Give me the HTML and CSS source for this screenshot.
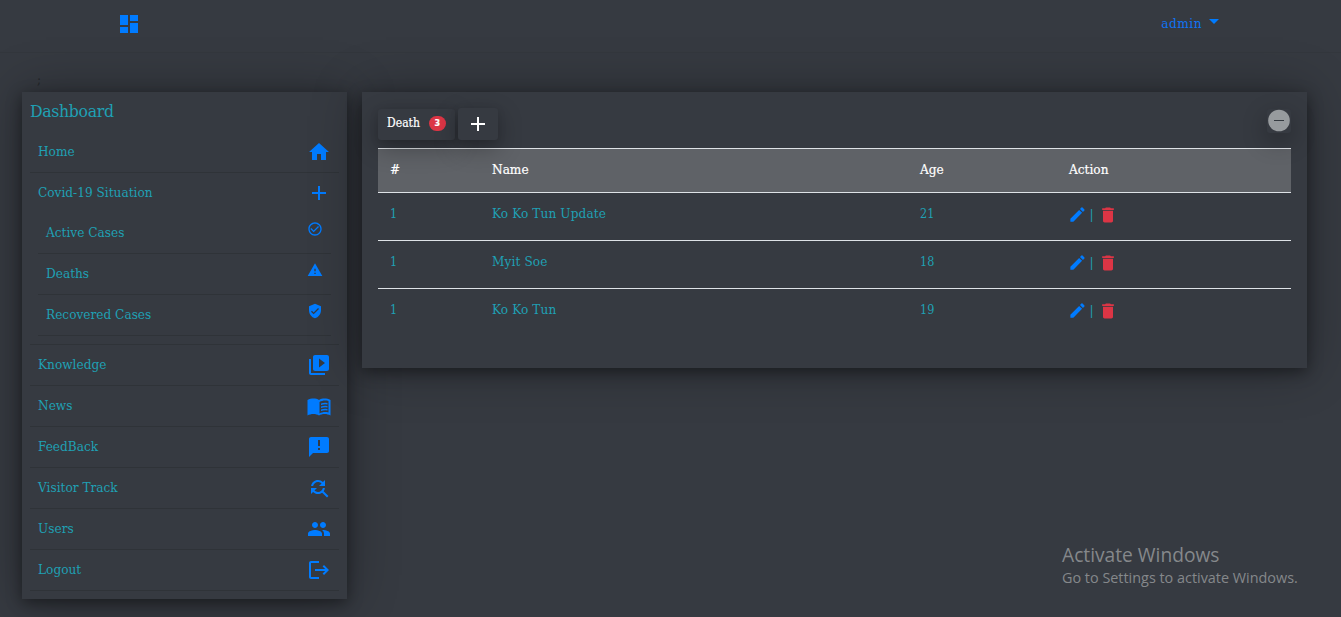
FILE: index.html
```html
<!DOCTYPE html>
<html lang="en">
<head>
<meta charset="utf-8">
<title>Dashboard</title>
<link rel="stylesheet" href="styles.css">
</head>
<body>
<svg class="defs" aria-hidden="true">
<symbol id="edit" viewBox="0 0 24 24"><path d="M3 17.25V21h3.75L17.81 9.94l-3.75-3.75L3 17.25zM20.71 7.04a1 1 0 0 0 0-1.41l-2.34-2.34a1 1 0 0 0-1.41 0l-1.83 1.83 3.75 3.75 1.83-1.83z"/></symbol>
<symbol id="trash" viewBox="0 0 24 24"><path d="M6 19c0 1.100.9 2 2 2h8c1.100 0 2-.9 2-2V7H6v12zM19 4h-3.500l-1-1h-5l-1 1H5v2h14V4z"/></symbol>
<symbol id="plus" viewBox="0 0 24 24"><path d="M19 13h-6v6h-2v-6H5v-2h6V5h2v6h6v2z"/></symbol>
</svg>
<header class="navbar">
  <a class="brand"><svg class="icon" viewBox="0 0 24 24"><path d="M3 13h8V3H3v10zm0 8h8v-6H3v6zm10 0h8V11h-8v10zm0-18v6h8V3h-8z"/></svg></a>
  <a class="user">admin<span class="caret"></span></a>
</header>
<div class="stray">;</div>
<div class="layout">
  <aside class="sidebar">
    <h1 class="title">Dashboard</h1>
    <a class="row"><span>Home</span><svg class="icon" viewBox="0 0 24 24"><path d="M10 20v-6h4v6h5v-8h3L12 3 2 12h3v8z"/></svg></a>
    <div class="group">
      <a class="row head"><span>Covid-19 Situation</span><svg class="icon"><use href="#plus"/></svg></a>
      <div class="subs">
        <a class="row sub"><span>Active Cases</span><svg class="icon" viewBox="0 0 24 24"><path d="M16.590 7.580L10 14.170l-3.590-3.580L5 12l5 5 8-8zM12 2C6.480 2 2 6.480 2 12s4.480 10 10 10 10-4.480 10-10S17.520 2 12 2zm0 18c-4.420 0-8-3.580-8-8s3.580-8 8-8 8 3.580 8 8-3.580 8-8 8z"/></svg></a>
        <a class="row sub"><span>Deaths</span><svg class="icon" viewBox="0 0 24 24"><path d="M1 21h22L12 2 1 21zm12-3h-2v-2h2v2zm0-4h-2v-4h2v4z"/></svg></a>
        <a class="row sub"><span>Recovered Cases</span><svg class="icon" viewBox="0 0 24 24"><path d="M12 1L3 5v6c0 5.550 3.840 10.740 9 12 5.160-1.260 9-6.450 9-12V5l-9-4zm-2 16l-4-4 1.410-1.410L10 14.170l6.590-6.590L18 9l-8 8z"/></svg></a>
      </div>
    </div>
    <a class="row"><span>Knowledge</span><svg class="icon" viewBox="0 0 24 24"><path d="M4 6H2v14c0 1.100.9 2 2 2h14v-2H4V6zm16-4H8c-1.100 0-2 .9-2 2v12c0 1.100.9 2 2 2h12c1.100 0 2-.9 2-2V4c0-1.100-.9-2-2-2zm-8 12.500v-9l6 4.500-6 4.500z"/></svg></a>
    <a class="row news"><span>News</span><svg class="icon" viewBox="0 0 24 24"><path fill-rule="evenodd" d="M12 5C10.500 3.900 8.400 3.500 6.500 3.500S2.400 3.900.5 5v15.500c1.500-1 4-1.500 6-1.500s4 .5 5.500 1.500c1.500-1 3.500-1.500 5.500-1.500s4.500.5 6 1.500V5c-1.900-1.100-4.100-1.500-6-1.500S13.500 3.900 12 5zm9.500 12.500c-3.200-.9-6.700-.3-9 1V7c2.300-1.400 5.800-1.900 9-1z"/><path d="M14 8.500q3-1.200 6.500-.6v1.500q-3.500-.5-6.500.6zm0 3q3-1.200 6.500-.6v1.500q-3.500-.5-6.500.6zm0 3q3-1.200 6.500-.6v1.500q-3.500-.5-6.500.6z"/></svg></a>
    <a class="row"><span>FeedBack</span><svg class="icon" viewBox="0 0 24 24"><path d="M20 2H4c-1.100 0-2 .9-2 2v18l4-4h14c1.100 0 2-.9 2-2V4c0-1.100-.9-2-2-2zm-7 13h-2v-2h2v2zm0-4h-2V5h2v6z"/></svg></a>
    <a class="row"><span>Visitor Track</span><svg class="icon" viewBox="0 0 24 24"><path d="M11 6c1.380 0 2.630.56 3.540 1.460L12 10h6V4l-2.050 2.050C14.680 4.780 12.930 4 11 4c-3.530 0-6.430 2.610-6.920 6H6.100c.46-2.280 2.480-4 4.900-4zm5.640 9.140c.66-.9 1.120-1.970 1.280-3.140H15.900c-.46 2.280-2.480 4-4.900 4-1.380 0-2.630-.56-3.540-1.460L10 12H4v6l2.050-2.050C7.320 17.220 9.070 18 11 18c1.550 0 2.980-.51 4.140-1.360L20 21.490 21.490 20l-4.850-4.860z"/></svg></a>
    <a class="row"><span>Users</span><svg class="icon" viewBox="0 0 24 24"><path d="M16 11c1.660 0 2.990-1.340 2.990-3S17.660 5 16 5s-3 1.340-3 3 1.340 3 3 3zm-8 0c1.660 0 2.990-1.340 2.990-3S9.660 5 8 5 5 6.340 5 8s1.340 3 3 3zm0 2c-2.330 0-7 1.170-7 3.500V19h14v-2.500C15 14.170 10.330 13 8 13zm8 0c-.29 0-.62.02-.97.05 1.160.84 1.970 1.970 1.970 3.450V19h6v-2.500c0-2.330-4.670-3.500-7-3.500z"/></svg></a>
    <a class="row"><span>Logout</span><svg class="icon" viewBox="0 0 24 24"><path d="M17 7l-1.410 1.410L18.170 11H8v2h10.170l-2.580 2.580L17 17l5-5zM4 5h8V3H4c-1.100 0-2 .9-2 2v14c0 1.100.9 2 2 2h8v-2H4V5z"/></svg></a>
  </aside>
  <main class="panel">
    <div class="toolbar">
      <button class="btn death">Death<span class="badge">3</span></button>
      <button class="btn add"><svg class="icon"><use href="#plus"/></svg></button>
      <button class="btn collapse"><svg viewBox="0 0 24 24"><circle cx="12" cy="11.500" r="10.800" fill="#979b9e"/><path d="M7 11.500h10" stroke="#343a40"/></svg></button>
    </div>
    <table class="table">
      <colgroup><col class="c-num"><col class="c-name"><col class="c-age"><col></colgroup>
      <thead><tr><th>#</th><th>Name</th><th>Age</th><th>Action</th></tr></thead>
      <tbody>
        <tr><td>1</td><td>Ko Ko Tun Update</td><td>21</td><td><div class="actions"><svg class="icon"><use href="#edit"/></svg><i class="pipe">|</i><svg class="icon del"><use href="#trash"/></svg></div></td></tr>
        <tr><td>1</td><td>Myit Soe</td><td>18</td><td><div class="actions"><svg class="icon"><use href="#edit"/></svg><i class="pipe">|</i><svg class="icon del"><use href="#trash"/></svg></div></td></tr>
        <tr><td>1</td><td>Ko Ko Tun</td><td>19</td><td><div class="actions"><svg class="icon"><use href="#edit"/></svg><i class="pipe">|</i><svg class="icon del"><use href="#trash"/></svg></div></td></tr>
      </tbody>
    </table>
  </main>
</div>
<div class="watermark"><div class="wm-title">Activate Windows</div><div class="wm-text">Go to Settings to activate Windows.</div></div>
</body>
</html>
```
FILE: styles.css
```css
* { box-sizing: border-box; }
body {
  margin: 0;
  height: 617px;
  overflow: hidden;
  background: #363a41;
  color: #1fa0b4;
  font: 13.5px/20px "DejaVu Serif Condensed", "DejaVu Serif", serif;
  font-stretch: condensed;
  letter-spacing: 0;
}
.defs { position: absolute; width: 0; height: 0; }
.icon { width: 24px; height: 24px; flex: none; fill: #007bff; display: block; }
.navbar {
  display: flex;
  justify-content: space-between;
  height: 53px;
  padding: 12px 122px 0 116.5px;
  border-bottom: 1px solid #33373d;
}
.user { display: flex; align-items: flex-start; color: #0f74f5; padding-top: 1px; letter-spacing: 0.5px; }
.caret { margin: 6px 0 0 7px; border: 5px solid transparent; border-top-color: #007bff; border-bottom: 0; }
.stray { height: 39px; padding: 16px 0 0 37px; color: #24272b; }
.layout { display: flex; align-items: flex-start; gap: 15px; padding: 0 34px 0 22px; }
.sidebar, .panel {
  background: #363a41;
  box-shadow: 0 0 48px rgba(0, 0, 0, .32), 0 4px 14px rgba(0, 0, 0, .4);
}
.sidebar { width: 325px; height: 507px; padding: 8px; }
.title { margin: 0; height: 32px; font-size: 17.5px; line-height: 22px; font-weight: 400; letter-spacing: -0.35px; }
.row {
  display: flex;
  justify-content: space-between;
  align-items: center;
  height: 41px;
  padding: 0 8.5px 0 8px;
  border-bottom: 1px solid #2f3338;
}
.row span { padding-bottom: 2px; }
.head { height: 40px; border: 0; }
.group { border-bottom: 1px solid #2f3338; padding-bottom: 8px; }
.subs { padding: 0 8px; }
.sub { padding-right: 8px; }
.sub .icon { width: 16px; height: 16px; align-self: flex-start; margin-top: 7.5px; }
.news .icon { margin-top: 2px; }
.panel { flex: 1; height: 276px; padding: 16px; }
.toolbar { display: flex; align-items: flex-start; height: 40px; }
.btn {
  display: flex;
  align-items: center;
  justify-content: center;
  border: 0;
  padding: 0;
  border-radius: 3px;
  background: #363a41;
  color: #fff;
  font: inherit;
  letter-spacing: 0;
  box-shadow: 0 8px 24px rgba(0, 0, 0, .3), 0 2px 8px rgba(0, 0, 0, .1);
}
.death { width: 77px; height: 31px; margin-top: 1px; padding-bottom: 3px; font-size: 12px; -webkit-text-stroke: 0.2px #fff; }
.badge {
  width: 17px;
  height: 15px;
  margin: 1px 0 0 9px;
  border-radius: 8px;
  background: #dc3545;
  font: bold 8px/15px "DejaVu Sans", sans-serif;
}
.add { width: 40px; height: 32px; margin-left: 3px; }
.add .icon { fill: #fff; }
.collapse { width: 24px; height: 24px; margin-left: auto; margin-top: 1px; box-shadow: 0 8px 24px rgba(0, 0, 0, .3); }
.table { width: 913px; table-layout: fixed; border-collapse: separate; border-spacing: 0; }
.c-num { width: 102px; }
.c-name { width: 428px; }
.c-age { width: 149px; }
th { height: 45px; padding: 0 12px 4px; border-top: 1px solid #dee2e6; border-bottom: 1px solid #dee2e6; background: rgba(135, 137, 141, .5); color: #fff; font-weight: 400; text-align: left; -webkit-text-stroke: 0.2px #fff; }
td { height: 48px; padding: 11px 12px 0; vertical-align: top; border-bottom: 1px solid #dee2e6; }
td:nth-child(odd) { font-size: 12.5px; }
tbody td:nth-child(2) { padding-top: 10px; letter-spacing: 0.1px; }
tbody tr:last-child td { border-bottom: 0; }
.actions { display: flex; align-items: center; margin-left: -1px; }
.actions .icon { width: 19px; height: 19px; margin-top: -1px; }
.actions .del { width: 20px; height: 20px; fill: #dc3545; margin: 1px 0 0 3.5px; }
.pipe { width: 5px; margin: -1px 0 1px 2.5px; font-style: normal; }
.watermark { position: absolute; left: 1062px; top: 543px; color: #85888b; font-family: "Open Sans", sans-serif; letter-spacing: 0; font-stretch: normal; white-space: nowrap; }
.wm-title { font-size: 19.2px; line-height: 24px; }
.wm-text { font-size: 14.4px; line-height: 21px; }
```
